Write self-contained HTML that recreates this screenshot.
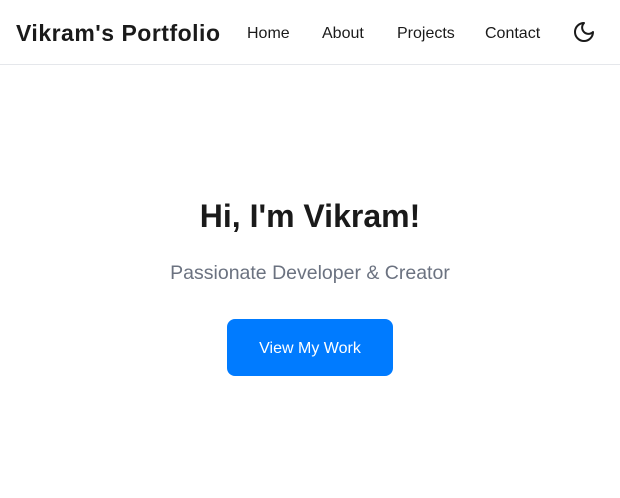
<!DOCTYPE html>
<html><head><style>
body{margin:0;width:620px;height:498px;background:#fff;font-family:"Liberation Sans",sans-serif;color:#1a1a1a;position:relative;overflow:hidden}
.a{position:absolute;white-space:nowrap}
nav{position:absolute;left:0;top:0;width:620px;height:64px;border-bottom:1px solid #e5e7eb}
.n{font-size:16px;top:25px}
</style></head><body>
<nav>
<div class="a" style="left:16px;top:20px;font-size:23px;font-weight:bold;letter-spacing:0.5px">Vikram's Portfolio</div>
<div class="a n" style="left:247px">Home</div>
<div class="a n" style="left:322px">About</div>
<div class="a n" style="left:397px">Projects</div>
<div class="a n" style="left:485px">Contact</div>
<svg class="a" style="left:572px;top:20px" width="24" height="24" viewBox="0 0 24 24" fill="none" stroke="#1a1a1a" stroke-width="2" stroke-linecap="round" stroke-linejoin="round"><path d="M12 3a6 6 0 0 0 9 9 9 9 0 1 1-9-9Z"/></svg>
</nav>
<div class="a" style="left:0;width:620px;text-align:center;top:198px;font-size:32px;font-weight:bold">Hi, I'm Vikram!</div>
<div class="a" style="left:0;width:620px;text-align:center;top:262px;font-size:19.5px;color:#6b7280">Passionate Developer &amp; Creator</div>
<div class="a" style="left:227px;top:319px;width:166px;height:57px;background:#007bff;border-radius:8px;color:#fff;font-size:16px;text-align:center;line-height:59px">View My Work</div>
</body></html>
